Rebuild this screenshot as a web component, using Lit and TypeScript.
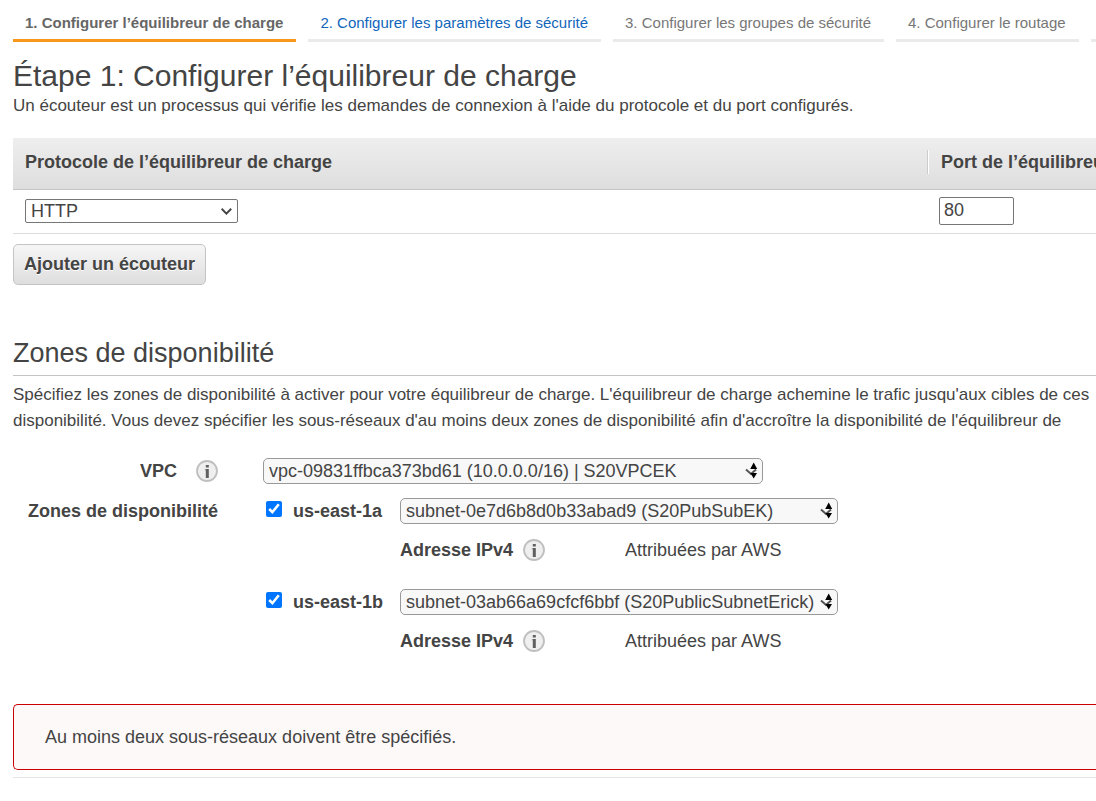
import { LitElement, html, css } from "lit";
import { customElement, property } from "lit/decorators.js";

@customElement("info-icon")
export class InfoIcon extends LitElement {
  static styles = css`
    :host { display: inline-flex; }
    .info { display: block; padding: 0; border: 0; background: none; line-height: 0; cursor: pointer; }
  `;
  render() {
    return html`<button class="info" type="button" aria-label="Info">
      <svg width="22" height="22" viewBox="0 0 22 22">
        <circle cx="11" cy="11" r="10" fill="#efefef" stroke="#bfbfbf" stroke-width="1.8" />
        <path d="M9.8 5h3v2.4h-3zM9.8 9h3v9h-3z" fill="#606060" />
        <path d="M8.8 9h1v1.5h-1z" fill="#999" />
      </svg>
    </button>`;
  }
}

@customElement("pick-list")
export class PickList extends LitElement {
  @property() value = "";
  @property() label = "";
  @property() kind = "double";
  static styles = css`
    :host { display: block; }
    .wrap { display: grid; align-items: center; }
    .box {
      grid-area: 1 / 1; width: 100%; height: 26px; margin: 0; padding: 0 20px 0 5px;
      appearance: none; border: 1px solid #999; border-radius: 5px; background: #f8f8f8;
      color: #444; font: 18px/24px "Liberation Sans", Arial, sans-serif;
    }
    .plain { height: 24px; border-color: #767676; border-radius: 2px; background: #fff; line-height: 22px; }
    .mark { grid-area: 1 / 1; justify-self: end; margin-right: 5px; pointer-events: none; }
  `;
  render() {
    const plain = this.kind === "plain";
    return html`<div class="wrap">
      <select class="box ${plain ? "plain" : ""}" aria-label=${this.label}>
        <option>${this.value}</option>
      </select>
      ${plain
        ? html`<svg class="mark" width="12" height="12" viewBox="0 0 12 12">
            <path d="M.6 3.8 5.4 8.6l4.8-4.8" fill="none" stroke="#444" stroke-width="2" />
          </svg>`
        : html`<svg class="mark" width="13" height="18" viewBox="0 0 13 18">
            <path d="M1 7.5 6 12l5-4.5" fill="none" stroke="#555" stroke-width="2" />
            <path d="M8.7.5 12.2 7H5.2zM5.4 11H12l-3.3 5.5z" fill="#000" />
          </svg>`}
    </div>`;
  }
}

@customElement("app-root")
export class AppRoot extends LitElement {
  private zones = [
    { name: "us-east-1a", subnet: "subnet-0e7d6b8d0b33abad9 (S20PubSubEK)" },
    { name: "us-east-1b", subnet: "subnet-03ab66a69cfcf6bbf (S20PublicSubnetErick)" },
  ];

  static styles = css`
    :host {
      display: block; overflow: hidden; padding-left: 13px; background: #fff;
      color: #444; font: 18px/26px "Liberation Sans", Arial, sans-serif;
    }
    * { box-sizing: border-box; }
    .steps { display: flex; gap: 12px; height: 42px; white-space: nowrap; font-size: 15px; }
    .step { flex: none; padding: 10px 13px 0 12px; border-bottom: 3px solid #eaeaea; color: #777; text-decoration: none; }
    .current { border-color: #f7981d; color: #666; font-weight: bold; }
    .open { color: #1166bb; }
    h1, h2, p { margin: 0; font-weight: normal; }
    h1 { margin-top: 17px; font-size: 30px; line-height: 34px; }
    p { font-size: 17px; }
    .listeners { width: 100%; margin-top: 19px; table-layout: fixed; border-collapse: separate; border-spacing: 0; }
    .protocol { width: 84.4%; }
    th { height: 52px; padding: 0 0 4px; text-align: left; white-space: nowrap; border-bottom: 1px solid #c4c4c4; background: linear-gradient(#eee, #dedede); overflow: hidden; }
    th .cell { display: block; padding-left: 12px; }
    .port-head .cell { padding-left: 13px; border-left: 1px solid #ccc; box-shadow: inset 1px 0 #fff; line-height: 24px; }
    td { height: 44px; padding: 0 12px 2px; border-bottom: 1px solid #ddd; }
    .protocol-list { width: 213px; }
    .port { display: block; width: 75px; height: 28px; padding: 0 4px; border: 1px solid #767676; border-radius: 2px; background: #fff; color: #444; font: inherit; }
    .add { display: block; height: 41px; margin-top: 10px; padding: 0 10px; border: 1px solid #c4c4c4; border-radius: 5px; background: linear-gradient(#f6f6f6, #dedede); color: #444; font: bold 18px "Liberation Sans", Arial, sans-serif; text-shadow: 0 1px #fff; }
    h2 { margin-top: 48px; padding: 4px 0 6px; border-bottom: 1px solid #c4c4c4; font-size: 27px; line-height: 32px; }
    .intro { margin-top: 6px; white-space: nowrap; }
    .form { display: grid; grid-template-columns: 205px 1fr; column-gap: 45px; row-gap: 14px; margin-top: 24px; }
    .label { display: flex; align-items: center; justify-content: flex-end; gap: 19px; height: 26px; font-weight: bold; }
    .vpc { max-width: 500px; margin-right: 16px; }
    .zones { display: grid; row-gap: 26px; }
    .zone { display: grid; grid-template-columns: 137px minmax(0, 438px); row-gap: 13px; }
    .zone-name { display: flex; gap: 11px; font-weight: bold; }
    .tick { width: 16px; height: 16px; margin: 3px 0 0 3px; accent-color: #0075ff; }
    .address { grid-column: 2; display: grid; grid-template-columns: 225px 1fr; }
    .address-name { display: flex; align-items: center; gap: 10px; font-weight: bold; }
    .alert { margin-top: 50px; padding: 19px 31px; border: 1px solid #c00; border-right: 0; border-radius: 5px 0 0 5px; background: #fdf9f9; }
    .end { height: 1px; margin: 7px 0 0; border: 0; background: #e4e4e4; }
  `;

  render() {
    return html`
      <nav class="steps">
        <a class="step current" href="#1">1. Configurer l’équilibreur de charge</a>
        <a class="step open" href="#2">2. Configurer les paramètres de sécurité</a>
        <a class="step" href="#3">3. Configurer les groupes de sécurité</a>
        <a class="step" href="#4">4. Configurer le routage</a>
        <a class="step" href="#5" aria-label="5"></a>
      </nav>
      <h1>Étape 1: Configurer l’équilibreur de charge</h1>
      <p>Un écouteur est un processus qui vérifie les demandes de connexion à l'aide du protocole et du port configurés.</p>
      <table class="listeners">
        <thead>
          <tr>
            <th class="protocol"><span class="cell">Protocole de l’équilibreur de charge</span></th>
            <th class="port-head"><span class="cell">Port de l’équilibreur</span></th>
          </tr>
        </thead>
        <tbody>
          <tr>
            <td><pick-list class="protocol-list" kind="plain" value="HTTP" label="Protocole"></pick-list></td>
            <td><input class="port" value="80" aria-label="Port" /></td>
          </tr>
        </tbody>
      </table>
      <button class="add" type="button">Ajouter un écouteur</button>
      <h2>Zones de disponibilité</h2>
      <p class="intro">
        Spécifiez les zones de disponibilité à activer pour votre équilibreur de charge. L'équilibreur de charge achemine le trafic jusqu'aux cibles de ces<br />
        disponibilité. Vous devez spécifier les sous-réseaux d'au moins deux zones de disponibilité afin d'accroître la disponibilité de l'équilibreur de
      </p>
      <div class="form">
        <div class="label">VPC <info-icon></info-icon></div>
        <pick-list class="vpc" value="vpc-09831ffbca373bd61 (10.0.0.0/16) | S20VPCEK" label="VPC"></pick-list>
        <div class="label">Zones de disponibilité</div>
        <div class="zones">
          ${this.zones.map((z) => html`
            <div class="zone">
              <label class="zone-name"><input class="tick" type="checkbox" checked />${z.name}</label>
              <pick-list value=${z.subnet} label=${z.name}></pick-list>
              <div class="address">
                <span class="address-name">Adresse IPv4 <info-icon></info-icon></span>
                <span>Attribuées par AWS</span>
              </div>
            </div>`)}
        </div>
      </div>
      <div class="alert" role="alert">Au moins deux sous-réseaux doivent être spécifiés.</div>
      <hr class="end" />
    `;
  }
}
